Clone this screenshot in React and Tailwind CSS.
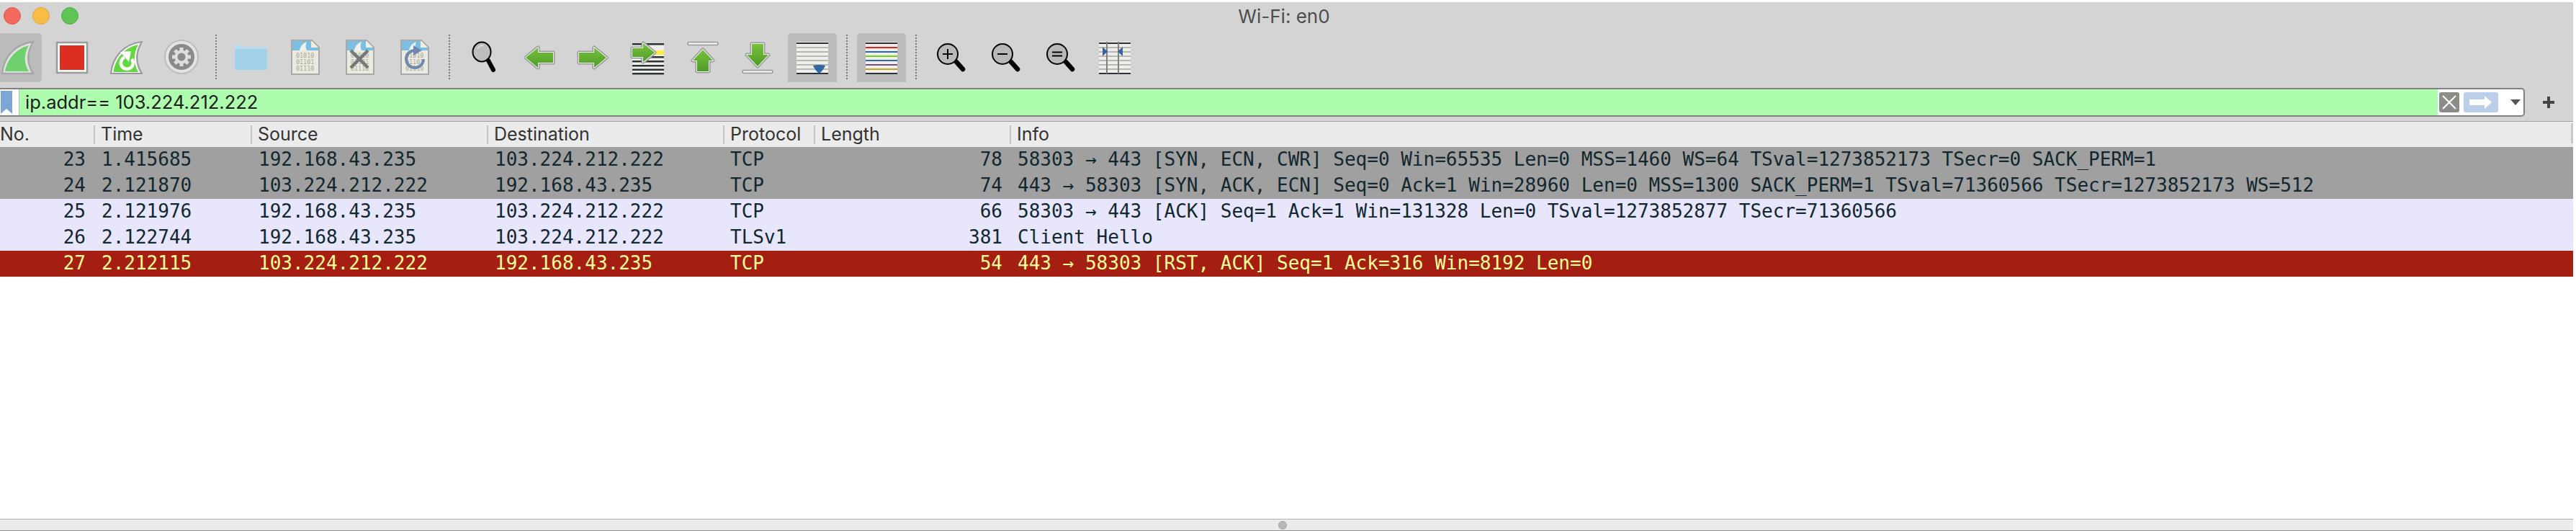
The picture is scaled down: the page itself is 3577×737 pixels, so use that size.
import React from "react";

const UI = { fontFamily: '"Inter", "Noto Sans", sans-serif' };
const MONO = { fontFamily: '"DejaVu Sans Mono", monospace' };

const Svg = ({ children }) => (
  <svg width="68" height="68" viewBox="0 0 68 68" fill="none">{children}</svg>
);

const Green = ({ id, dir = "v" }) => (
  <defs>
    <linearGradient id={id} x1="0" y1="0" x2={dir === "h" ? "1" : "0"} y2={dir === "h" ? "0" : "1"}>
      <stop offset="0" stopColor="#78c13c" />
      <stop offset="1" stopColor="#4f9c28" />
    </linearGradient>
  </defs>
);

const FIN = "M13 56C15 33 31 15 56 12C47 27 47 42 56 56Z";

const FinIcon = () => (
  <Svg>
    <path d={FIN} fill="#e2e2e2" stroke="#a6a6a6" strokeWidth="2.4" strokeLinejoin="round" />
    <path d="M17 53C20 36 33 21 50 17C43 29 43 42 50 53Z" fill="#6fd06e" />
  </Svg>
);

const StopIcon = () => (
  <Svg>
    <rect x="13" y="13" width="42" height="42" fill="#ffffff" stroke="#9a9a9a" strokeWidth="2.5" />
    <rect x="17" y="17" width="34" height="34" fill="#dd2f20" />
  </Svg>
);

const ReloadFinIcon = () => (
  <Svg>
    <path d="M12 56C14 33 30 15 55 12C46 27 46 42 55 56Z" fill="#ffffff" stroke="#999999" strokeWidth="2.2" strokeLinejoin="round" />
    <path d="M15.500 54C18 35 32 19 50 16C43 29 43 42 50 54Z" fill="#62d83e" />
    <path d="M31 33.500A8.500 8.500 0 1 0 41 36" stroke="#ffffff" strokeWidth="4.500" fill="none" />
    <path d="M25 26L40 25L37 40Z" fill="#ffffff" />
  </Svg>
);

const gearTeeth = [0, 45, 90, 135, 180, 225, 270, 315];
const GearIcon = () => (
  <Svg>
    <circle cx="34" cy="33" r="23" fill="#e4e4e4" stroke="#bdbdbd" strokeWidth="2" />
    <circle cx="34" cy="33" r="18" fill="#8a8a8a" />
    {gearTeeth.map((a) => (
      <rect key={a} x="31.500" y="20" width="5" height="7" fill="#dedede" transform={`rotate(${a} 34 33)`} />
    ))}
    <circle cx="34" cy="33" r="7.500" stroke="#dedede" strokeWidth="4" fill="#8a8a8a" />
  </Svg>
);

const FolderIcon = () => (
  <Svg>
    <path d="M12 20Q12 17 15 17H23Q25 17 27 20Z" fill="#b5dcef" />
    <rect x="12" y="19" width="45" height="4" fill="#b5dcef" />
    <rect x="12" y="22" width="45" height="29" rx="1.500" fill="#a3d2ea" />
  </Svg>
);

const FileBase = () => (
  <>
    <path d="M15 10H43L53 20V57H15Z" fill="#eaeadf" stroke="#a9a9a9" strokeWidth="2" strokeLinejoin="miter" />
    <path d="M16 11H42V20H52V24H16Z" fill="#7dbfe2" />
    <path d="M26 24C27 18 31 14 36 12C34 16 34 20 36 24Z" fill="#f2f2ec" />
    <path d="M43 11L52 20H43Z" fill="#f0f0ea" />
    <g fill="#a8a89f" fontSize="8.400" style={MONO}>
      <text x="21" y="34">01010</text>
      <text x="21" y="43">01101</text>
      <text x="21" y="52">01110</text>
    </g>
  </>
);

const FileIcon = () => <Svg><FileBase /></Svg>;

const FileCloseIcon = () => (
  <Svg>
    <FileBase />
    <path d="M21 24L45 48M45 24L21 48" stroke="#777777" strokeWidth="4.500" />
  </Svg>
);

const FileReloadIcon = () => (
  <Svg>
    <FileBase />
    <path d="M46 36A12 12 0 1 1 33 24" stroke="#7088b0" strokeWidth="4" fill="none" />
    <path d="M32 17L44 24L32 31Z" fill="#7088b0" />
  </Svg>
);

const SearchIcon = () => (
  <Svg>
    <path d="M40 38L47 51" stroke="#000000" strokeWidth="6" strokeLinecap="round" />
    <ellipse cx="31" cy="26" rx="12.500" ry="13.500" fill="#bdbdbd" stroke="#000000" strokeWidth="2" />
    <path d="M25 21Q28 17 33 17" stroke="#ffffff" strokeWidth="1" fill="none" />
  </Svg>
);

const Arrow = ({ d, id, dir = "v" }) => (
  <>
    <Green id={id} dir={dir} />
    <path d={d} fill={`url(#${id})`} stroke="#9a9a9a" strokeWidth="5" strokeLinejoin="round" />
    <path d={d} fill="none" stroke="#f0f0f0" strokeWidth="2" strokeLinejoin="round" />
    <path d={d} fill={`url(#${id})`} />
  </>
);

const BackIcon = () => (
  <Svg><Arrow id="gb" d="M16 34L33 20V27H54V41H33V48Z" /></Svg>
);
const ForwardIcon = () => (
  <Svg><Arrow id="gf" d="M52 34L35 20V27H14V41H35V48Z" /></Svg>
);

const stripes = [14, 20, 26, 32, 38, 44, 50, 56];
const GotoIcon = () => (
  <Svg>
    <rect x="12" y="14" width="44" height="43" fill="#eeeeec" />
    {[15, 27, 33, 39, 45, 50.500, 56].map((y) => (
      <rect key={y} x="12" y={y - 1} width="44" height="2.500" fill="#2e3436" />
    ))}
    <rect x="40" y="24" width="16" height="6" fill="#fce94f" />
    <Arrow id="gg" d="M43 27L27 14V21H12V33H27V40Z" />
  </Svg>
);

const UpIcon = () => (
  <Svg>
    <rect x="13" y="12.500" width="42" height="4" rx="2" fill="#f0f0f0" stroke="#9a9a9a" strokeWidth="1.500" />
    <Arrow id="gu" d="M34 23L48 38H42V53H26V38H20Z" />
  </Svg>
);
const DownIcon = () => (
  <Svg>
    <rect x="13" y="51.500" width="42" height="4" rx="2" fill="#f0f0f0" stroke="#9a9a9a" strokeWidth="1.500" />
    <Arrow id="gd" d="M34 46L49 30H42V15H26V30H19Z" />
  </Svg>
);

const Sheet = ({ colors }) => (
  <>
    <rect x="12" y="12" width="44" height="44" fill="#eeeeec" />
    {stripes.map((y, i) => (
      <rect key={y} x="12" y={y - 1} width="44" height="2" fill={colors[i]} />
    ))}
  </>
);

const PLAIN = ["#2e3436", "#b9b9b0", "#b9b9b0", "#b9b9b0", "#b9b9b0", "#b9b9b0", "#b9b9b0", "#2e3436"];

const AutoScrollIcon = () => (
  <Svg>
    <Sheet colors={PLAIN} />
    <path d="M35 45Q43 43 52 45Q49 52 43.500 56Q38 52 35 45Z" fill="#3465a4" />
  </Svg>
);

const ColorIcon = () => (
  <Svg>
    <Sheet colors={["#2e3436", "#e0261c", "#3465a4", "#73d216", "#3465a4", "#75507b", "#c4a02a", "#2e3436"]} />
  </Svg>
);

const Lens = ({ children }) => (
  <>
    <path d="M42 40L51 50" stroke="#000000" strokeWidth="6.500" strokeLinecap="round" />
    <circle cx="30" cy="29" r="14" fill="#b9b9b9" stroke="#000000" strokeWidth="2" />
    {children}
  </>
);

const ZoomInIcon = () => (
  <Svg><Lens><path d="M23 29H37M30 22V36" stroke="#000000" strokeWidth="2" /></Lens></Svg>
);
const ZoomOutIcon = () => (
  <Svg><Lens><path d="M23 29H37" stroke="#000000" strokeWidth="2" /></Lens></Svg>
);
const ZoomEqIcon = () => (
  <Svg><Lens><path d="M23 26.500H37M23 31.500H37" stroke="#000000" strokeWidth="2" /></Lens></Svg>
);

const ResizeIcon = () => (
  <Svg>
    <Sheet colors={PLAIN} />
    <rect x="22" y="12" width="2" height="44" fill="#808080" />
    <rect x="38" y="12" width="2" height="44" fill="#808080" />
    <path d="M17 19L24 25.500L17 32Z" fill="#3465a4" />
    <path d="M45 19L38 25.500L45 32Z" fill="#3465a4" />
  </Svg>
);

const Btn = ({ active, first, children }) => (
  <div
    className={`w-[68px] h-[68px] shrink-0 ${active ? "bg-[#bbbbbb]" : ""} ${active ? (first ? "rounded-r-[5px]" : "rounded-t-[5px]") : ""}`}
  >
    {children}
  </div>
);

const Sep = () => (
  <div className="w-3 h-[62px] mt-[2px] shrink-0 flex justify-center">
    <div className="w-0 h-full border-l-2 border-dotted border-[#808080]" />
  </div>
);

const Header = ({ label, first }) => (
  <div className="flex items-center h-full min-w-0">
    {!first && <div className="w-[2px] h-[26px] bg-[#c6c6c6] shrink-0 mr-2" />}
    <span className="text-[25px] leading-none text-[#333333] whitespace-nowrap">{label}</span>
  </div>
);

const COLS = "grid grid-cols-[130px_218px_328px_328px_126px_272px_1fr]";

const ROWS = [
  ["23", "1.415685", "192.168.43.235", "103.224.212.222", "TCP", "78", "58303 → 443 [SYN, ECN, CWR] Seq=0 Win=65535 Len=0 MSS=1460 WS=64 TSval=1273852173 TSecr=0 SACK_PERM=1", "bg-[#a0a0a0] text-[#12272e]"],
  ["24", "2.121870", "103.224.212.222", "192.168.43.235", "TCP", "74", "443 → 58303 [SYN, ACK, ECN] Seq=0 Ack=1 Win=28960 Len=0 MSS=1300 SACK_PERM=1 TSval=71360566 TSecr=1273852173 WS=512", "bg-[#a0a0a0] text-[#12272e]"],
  ["25", "2.121976", "192.168.43.235", "103.224.212.222", "TCP", "66", "58303 → 443 [ACK] Seq=1 Ack=1 Win=131328 Len=0 TSval=1273852877 TSecr=71360566", "bg-[#e7e6fd] text-[#12272e]"],
  ["26", "2.122744", "192.168.43.235", "103.224.212.222", "TLSv1", "381", "Client Hello", "bg-[#e7e6fd] text-[#12272e]"],
  ["27", "2.212115", "103.224.212.222", "192.168.43.235", "TCP", "54", "443 → 58303 [RST, ACK] Seq=1 Ack=316 Win=8192 Len=0", "bg-[#a41e11] text-[#fffc9c]"],
];

export default function App() {
  return (
    <div className="w-[3577px] h-[737px] overflow-hidden bg-white pt-[3px]" style={UI}>
      <div className="w-[3573px] h-[734px] bg-[#d4d4d4] flex flex-col">
        {/* Title bar */}
        <div className="h-[43px] grid grid-cols-3 items-center pl-[5px] pr-[12px] shrink-0">
          <div className="flex gap-4 -mt-[5px]">
            <div className="w-6 h-6 rounded-full bg-[#f46a5e] border border-[#e0574c]" />
            <div className="w-6 h-6 rounded-full bg-[#f8bd47] border border-[#e0a53a]" />
            <div className="w-6 h-6 rounded-full bg-[#5fc455] border border-[#4ead45]" />
          </div>
          <div className="text-center text-[26px] leading-none text-[#4d4d4d] -mt-[3px]">Wi-Fi: en0</div>
          <div />
        </div>

        {/* Toolbar */}
        <div className="h-[76px] shrink-0 flex gap-2 -ml-[10px] items-start">
          <Btn active first><FinIcon /></Btn>
          <Btn><StopIcon /></Btn>
          <Btn><ReloadFinIcon /></Btn>
          <Btn><GearIcon /></Btn>
          <Sep />
          <Btn><FolderIcon /></Btn>
          <Btn><FileIcon /></Btn>
          <Btn><FileCloseIcon /></Btn>
          <Btn><FileReloadIcon /></Btn>
          <Sep />
          <Btn><SearchIcon /></Btn>
          <Btn><BackIcon /></Btn>
          <Btn><ForwardIcon /></Btn>
          <Btn><GotoIcon /></Btn>
          <Btn><UpIcon /></Btn>
          <Btn><DownIcon /></Btn>
          <Btn active><AutoScrollIcon /></Btn>
          <Sep />
          <Btn active><ColorIcon /></Btn>
          <Sep />
          <Btn><ZoomInIcon /></Btn>
          <Btn><ZoomOutIcon /></Btn>
          <Btn><ZoomEqIcon /></Btn>
          <Btn><ResizeIcon /></Btn>
        </div>

        {/* Filter bar */}
        <div className="h-10 shrink-0 flex">
          <div className="w-[3506px] h-full flex border-y-2 border-r-2 border-[#808080] rounded-r-[5px] bg-white overflow-hidden">
            <div className="w-[27px] shrink-0 border-r border-[#b5b5b5] flex items-center pl-[1px]">
              <svg width="16" height="32" viewBox="0 0 16 32">
                <path d="M0 0H16V32L8 25L0 32Z" fill="#7ba6d5" />
              </svg>
            </div>
            <div className="w-[3358px] shrink-0 bg-[#aefcae] flex items-center pl-[8px] text-[25.5px] leading-none text-[#1c1c1c] whitespace-nowrap">
              ip.addr== 103.224.212.222
            </div>
            <div className="flex-1 flex items-center pl-[2px] gap-[6px]">
              <div className="w-7 h-7 rounded-[3px] bg-[#8c8c88] flex items-center justify-center">
                <svg width="20" height="20" viewBox="0 0 20 20">
                  <path d="M1 1L19 19M19 1L1 19" stroke="#ffffff" strokeWidth="2" />
                </svg>
              </div>
              <div className="w-12 h-7 rounded-[3px] bg-[#bbd0e8] flex items-center justify-center">
                <svg width="34" height="18" viewBox="0 0 34 18">
                  <path d="M1 5H22V0L32 9L22 18V13H1Z" fill="#ffffff" />
                </svg>
              </div>
              <svg className="ml-[11px]" width="14" height="8" viewBox="0 0 14 8">
                <path d="M0 0H14L7 8Z" fill="#555555" />
              </svg>
            </div>
          </div>
          <div className="flex-1 flex items-center justify-center pr-[2px]">
            <svg width="16" height="16" viewBox="0 0 16 16">
              <path d="M0 8H16M8 0V16" stroke="#444444" strokeWidth="4" />
            </svg>
          </div>
        </div>

        {/* Packet list */}
        <div className="flex-1 mt-[6px] bg-white flex flex-col min-h-0">
          <div className={`${COLS} h-9 shrink-0 bg-[#ebebeb] border-t border-[#a0a0a0] relative`}>
            <Header label="No." first />
            <Header label="Time" />
            <Header label="Source" />
            <Header label="Destination" />
            <Header label="Protocol" />
            <Header label="Length" />
            <Header label="Info" />
            <div className="absolute right-0 top-[2px] w-[3px] h-[28px] bg-[#c8c8c8]" />
          </div>
          {ROWS.map((r) => (
            <div key={r[0]} className={`${COLS} h-9 shrink-0 items-center pb-[2px] text-[26px] leading-none whitespace-pre ${r[7]}`} style={MONO}>
              <div className="text-right pr-[11px]">{r[0]}</div>
              <div className="pl-[11px]">{r[1]}</div>
              <div className="pl-[11px]">{r[2]}</div>
              <div className="pl-[11px]">{r[3]}</div>
              <div className="pl-[10px]">{r[4]}</div>
              <div className="text-right pr-[10px]">{r[5]}</div>
              <div className="pl-[11px]">{r[6]}</div>
            </div>
          ))}
          <div className="flex-1" />
          <div className="h-[17px] shrink-0 bg-[#ebebeb] border-t border-[#b0b0b0] border-b border-b-[#909090] flex items-center justify-center pr-[12px]">
            <div className="w-3 h-3 rounded-full bg-[#b8b8b8] border border-[#a8a8a8]" />
          </div>
        </div>
      </div>
    </div>
  );
}
